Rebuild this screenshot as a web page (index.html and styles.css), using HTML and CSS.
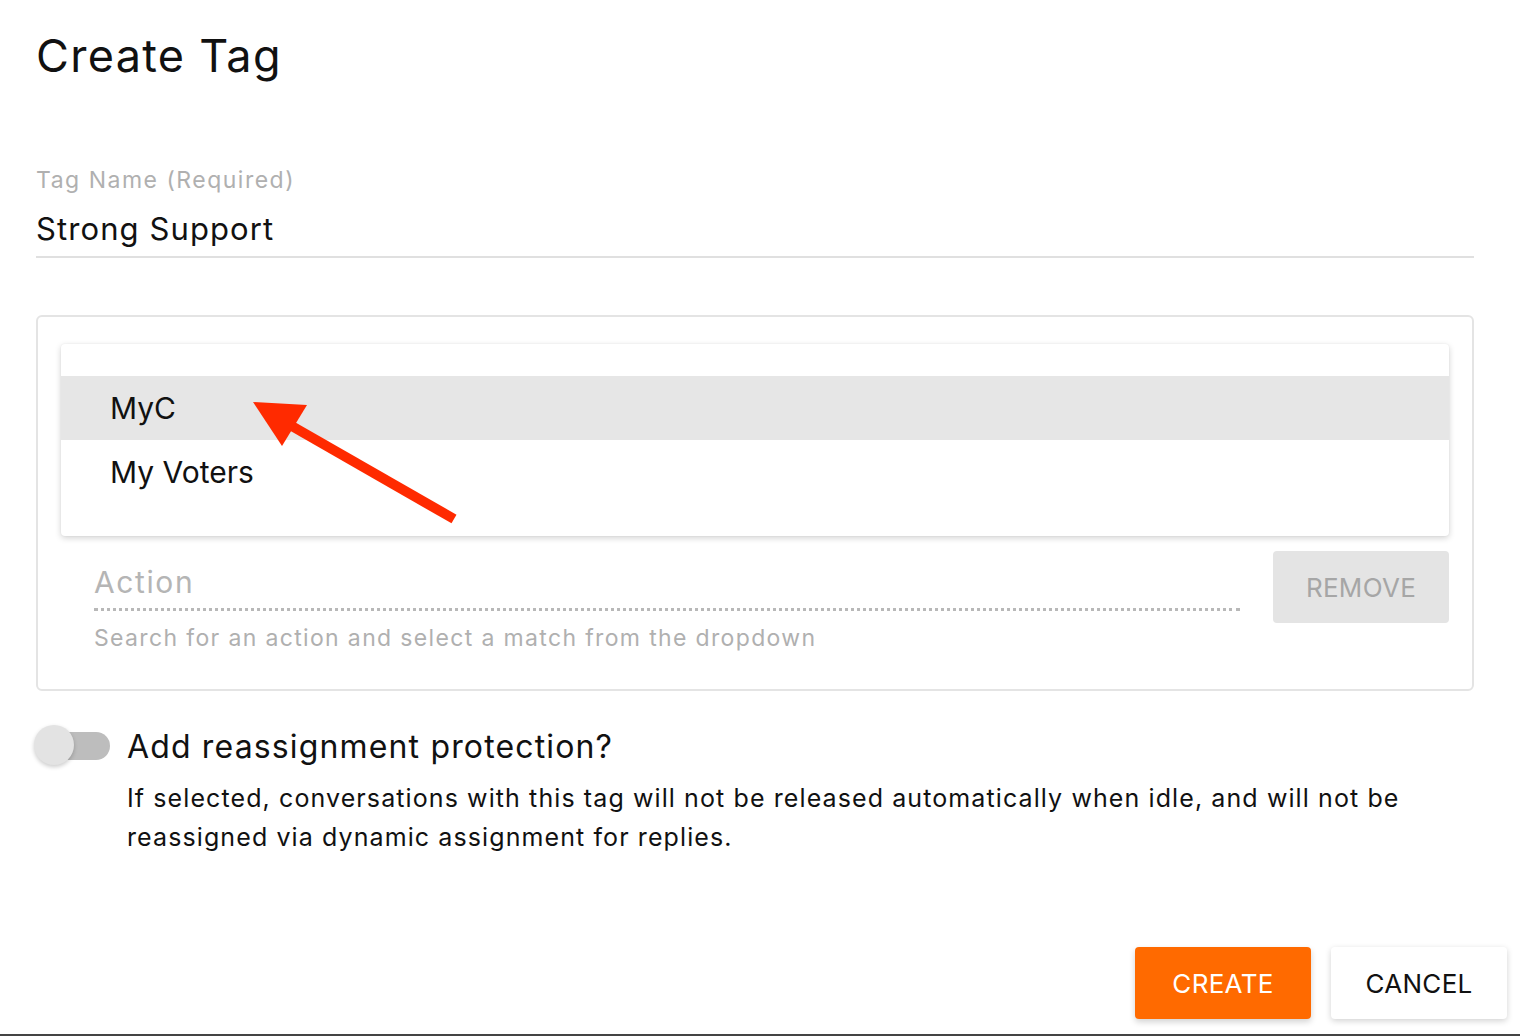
FILE: index.html
```html
<!DOCTYPE html>
<html lang="en">
<head>
<meta charset="utf-8">
<title>Create Tag</title>
<link rel="stylesheet" href="styles.css">
</head>
<body>
<div class="dialog">
  <h1 class="title">Create Tag</h1>

  <div class="field">
    <div class="field-label">Tag Name (Required)</div>
    <div class="field-value">Strong Support</div>
  </div>

  <div class="action-box">
    <ul class="menu">
      <li class="menu-item active">MyC</li>
      <li class="menu-item">My Voters</li>
    </ul>
    <div class="action-row">
      <div class="action-field">
        <div class="action-input">Action</div>
        <div class="action-help">Search for an action and select a match from the dropdown</div>
      </div>
      <button class="btn btn-remove" type="button">REMOVE</button>
    </div>
  </div>

  <div class="protect">
    <div class="toggle"><span class="toggle-track"></span><span class="toggle-thumb"></span></div>
    <div class="protect-text">
      <div class="protect-title">Add reassignment protection?</div>
      <p class="protect-desc">If selected, conversations with this tag will not be released automatically when idle, and will not be reassigned via dynamic assignment for replies.</p>
    </div>
  </div>

  <div class="actions">
    <button class="btn btn-create" type="button">CREATE</button>
    <button class="btn btn-cancel" type="button">CANCEL</button>
  </div>

  <svg class="annotation" width="220" height="140" viewBox="0 0 220 140" aria-hidden="true">
    <line x1="204" y1="119" x2="40" y2="25" stroke="#ff2a00" stroke-width="10"/>
    <polygon points="3,2 57,5 32,46" fill="#ff2a00"/>
  </svg>
</div>
</body>
</html>
```

FILE: styles.css
```css
* { box-sizing: border-box; }

html, body {
  margin: 0;
  padding: 0;
  background: #ffffff;
}

body {
  font-family: Inter, "Open Sans", sans-serif;
  color: #111111;
}

.dialog {
  position: relative;
  height: 1036px;
  padding: 28px 46px 0 36px;
  border-bottom: 2px solid #444444;
}

.title {
  margin: 0;
  font-size: 45px;
  line-height: 56px;
  font-weight: 400;
  letter-spacing: 1.3px;
  color: #111111;
}

.field {
  margin-top: 80px;
}

.field-label {
  font-size: 23px;
  line-height: 32px;
  letter-spacing: 1.5px;
  color: #b0b0b0;
}

.field-value {
  margin-top: 12px;
  font-size: 31px;
  line-height: 42px;
  letter-spacing: 1.1px;
  color: #111111;
  padding-bottom: 6px;
  border-bottom: 2px solid #e0e0e0;
}

.action-box {
  margin-top: 57px;
  border: 2px solid #e4e4e4;
  border-radius: 6px;
  padding: 27px 23px 36px 23px;
}

.menu {
  list-style: none;
  margin: 0;
  padding: 32px 0;
  background: #ffffff;
  border-radius: 4px;
  box-shadow: 0 2px 6px rgba(0, 0, 0, 0.18), 0 0 2px rgba(0, 0, 0, 0.06);
}

.menu-item {
  height: 64px;
  line-height: 64px;
  padding-left: 49px;
  font-size: 30px;
  color: #111111;
}

.menu-item.active {
  background: #e6e6e6;
}

.action-row {
  display: flex;
  align-items: flex-start;
  gap: 33px;
  margin-top: 15px;
  padding-left: 33px;
}

.action-field {
  flex: 1;
}

.action-input {
  font-size: 30px;
  line-height: 40px;
  letter-spacing: 1.6px;
  padding-top: 11px;
  padding-bottom: 6px;
  color: #b5b5b5;
  border-bottom: 3px dotted #b8b8b8;
}

.action-help {
  margin-top: 12px;
  font-size: 23px;
  line-height: 30px;
  letter-spacing: 1.35px;
  color: #b0b0b0;
}

.btn {
  font-family: inherit;
  border: none;
  border-radius: 4px;
  width: 176px;
  height: 72px;
  font-size: 26px;
  letter-spacing: 0.3px;
  cursor: pointer;
  padding: 0;
}

.btn-remove {
  background: #e4e4e4;
  color: #a6a6a6;
}

.protect {
  display: flex;
  align-items: flex-start;
  gap: 16px;
  margin-top: 36px;
}

.toggle {
  position: relative;
  width: 77px;
  height: 44px;
  flex: none;
  margin-left: -2px;
  margin-top: -4px;
}

.toggle-track {
  position: absolute;
  left: 20px;
  top: 9px;
  width: 56px;
  height: 28px;
  border-radius: 14px;
  background: #bdbdbd;
}

.toggle-thumb {
  position: absolute;
  left: 0;
  top: 2px;
  width: 40px;
  height: 40px;
  border-radius: 50%;
  background: #e3e3e3;
  box-shadow: 0 2px 4px rgba(0, 0, 0, 0.2);
}

.protect-title {
  font-size: 32px;
  line-height: 40px;
  letter-spacing: 1.15px;
  color: #111111;
}

.protect-desc {
  margin: 12px 0 0;
  font-size: 25px;
  line-height: 39px;
  letter-spacing: 1.1px;
  color: #111111;
}

.actions {
  display: flex;
  justify-content: flex-end;
  gap: 20px;
  margin-top: 90px;
  margin-right: -33px;
}

.btn-create {
  background: #ff6a00;
  color: #ffffff;
  box-shadow: 0 3px 6px rgba(0, 0, 0, 0.18);
}

.btn-cancel {
  background: #ffffff;
  color: #111111;
  box-shadow: 0 2px 6px rgba(0, 0, 0, 0.18);
}

.annotation {
  position: absolute;
  left: 250px;
  top: 400px;
}
```
